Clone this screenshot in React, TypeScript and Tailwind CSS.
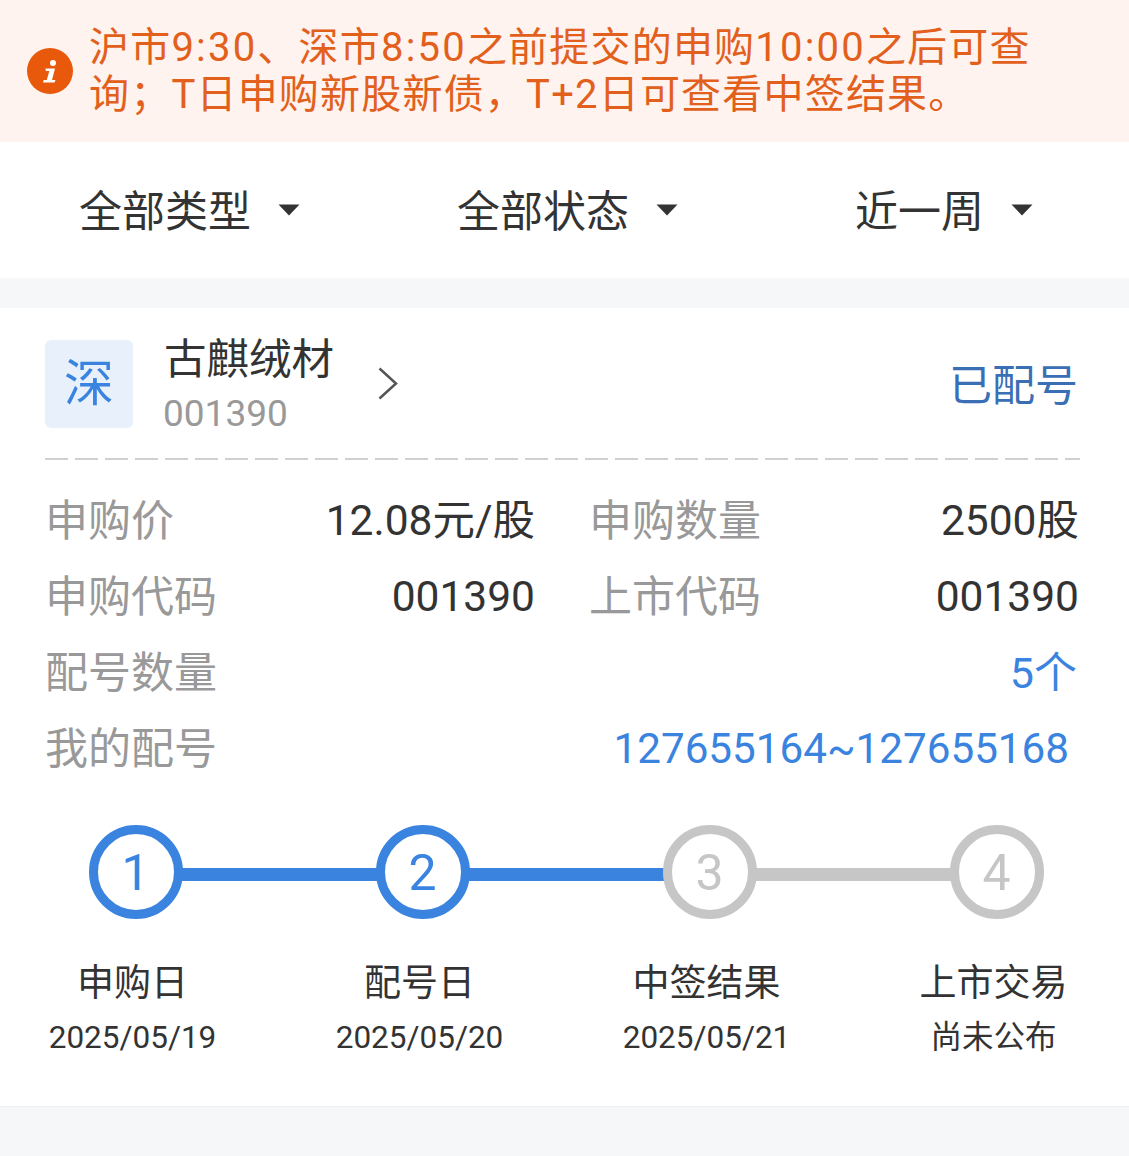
const font = "font-['Roboto','Noto_Sans_CJK_SC',sans-serif]";

const filters = [
  { label: '全部类型', width: 'w-[378px]' },
  { label: '全部状态', width: 'w-[398px]' },
  { label: '近一周', width: 'w-[353px]' },
];

const steps = [
  { n: '1', title: '申购日', date: '2025/05/19', active: true },
  { n: '2', title: '配号日', date: '2025/05/20', active: true },
  { n: '3', title: '中签结果', date: '2025/05/21', active: false },
  { n: '4', title: '上市交易', date: '尚未公布', active: false },
];

function Caret() {
  return (
    <svg width="22" height="12" viewBox="0 0 22 12" className="ml-[27px] mt-[-4px]">
      <path d="M0.5 0.5H21.5L11 11.5Z" fill="#333" />
    </svg>
  );
}

function Row({ label, value }: { label: string; value: string }) {
  return (
    <div className="flex h-[76px] items-center justify-between">
      <span className="text-[43px] text-[#999]">{label}</span>
      <span className="text-[42.5px] text-[#333]">{value}</span>
    </div>
  );
}

function Num({ children }: { children: string }) {
  return <span className="tracking-[2.2px]">{children}</span>;
}

export default function App() {
  return (
    <div className={`${font} flex h-[1156px] w-[1129px] flex-col overflow-hidden bg-[#f5f7f9]`}>
      <div className="flex h-[142px] items-center bg-[#fef3ef] pl-[27px] pr-[80px]">
        <svg width="46" height="46" viewBox="0 0 46 46" className="shrink-0">
          <circle cx="23" cy="23" r="23" fill="#e8590c" />
          <circle cx="26" cy="15" r="3" fill="#fff" />
          <path d="M18.5 20.5h9.5l-3 11.5h3.5l-1 2.5H16l.8-2.5h3l2.5-9h-3.5z" fill="#fff" />
        </svg>
        <p className="ml-[16px] text-[40px] leading-[47px] tracking-[1.2px] text-[#e2601c]">
          沪市<Num>9:30</Num>、深市<Num>8:50</Num>之前提交的申购<Num>10:00</Num>之后可查询；T日申购新股新债，T+2日可查看中签结果。
        </p>
      </div>

      <div className="flex h-[136px] items-center bg-white pt-[4px]">
        {filters.map((f) => (
          <div key={f.label} className={`flex items-center pl-[79px] ${f.width}`}>
            <span className="text-[43px] text-[#333]">{f.label}</span>
            <Caret />
          </div>
        ))}
      </div>

      <div className="mt-[30px] h-[799px] border-b border-[#eee] bg-white pl-[45px] pr-[49px]">
        <div className="flex h-[150px] items-center pt-[2px]">
          <div className="flex h-[88px] w-[88px] items-center justify-center rounded-[6px] bg-[#e8f1fb] text-[50px] text-[#3a84e0]">
            深
          </div>
          <div className="ml-[31px] flex flex-col pt-[6px]">
            <span className="text-[42.5px] leading-[54px] text-[#333]">古麒绒材</span>
            <span className="-ml-px text-[37px] leading-[54px] text-[#999]">001390</span>
          </div>
          <svg width="20" height="33" viewBox="0 0 20 33" className="mb-[2px] ml-[44px]">
            <path d="M1.5 1.5L18 16.5L1.5 31.5" fill="none" stroke="#555" strokeWidth="2.5" />
          </svg>
          <span className="ml-auto pr-[2px] pt-[4px] text-[43px] text-[#3a6fb5]">已配号</span>
        </div>
        <div className="h-[2px] bg-[repeating-linear-gradient(90deg,#d0d0d0_0_23px,transparent_23px_30px)]" />

        <div className="mt-[23px]">
          <div className="flex">
            <div className="w-[490px]"><Row label="申购价" value="12.08元/股" /></div>
            <div className="ml-[54px] w-[490px]"><Row label="申购数量" value="2500股" /></div>
          </div>
          <div className="flex">
            <div className="w-[490px]"><Row label="申购代码" value="001390" /></div>
            <div className="ml-[54px] w-[490px]"><Row label="上市代码" value="001390" /></div>
          </div>
          <div className="flex h-[76px] items-center justify-between pr-[3px]">
            <span className="text-[43px] text-[#999]">配号数量</span>
            <span className="text-[43px] text-[#3a84e0]">5个</span>
          </div>
          <div className="flex h-[76px] items-center justify-between pr-[11px]">
            <span className="text-[43px] text-[#999]">我的配号</span>
            <span className="text-[42.2px] text-[#3a84e0]">127655164~127655168</span>
          </div>
        </div>

        <div className="relative mt-[38px] -ml-[53px] grid w-[1148px] grid-cols-4">
          <div className="absolute left-[143px] top-[43px] h-[13px] w-[287px] bg-[#3a84e0]" />
          <div className="absolute left-[430px] top-[43px] h-[13px] w-[287px] bg-[#3a84e0]" />
          <div className="absolute left-[717px] top-[43px] h-[13px] w-[287px] bg-[#c6c6c6]" />
          {steps.map((s) => (
            <div key={s.n} className="relative flex w-[287px] flex-col items-center">
              <div
                className={`flex h-[94px] w-[94px] items-center justify-center rounded-full border-[9px] bg-white pt-[3px] text-[50px] ${
                  s.active ? 'border-[#3a84e0] text-[#3a84e0]' : 'border-[#c6c6c6] text-[#c6c6c6]'
                }`}
              >
                {s.n}
              </div>
              <span className="mr-[6px] mt-[38px] text-[37px] leading-[54px] text-[#333]">{s.title}</span>
              <span className="mr-[6px] text-[31.5px] leading-[54px] text-[#333]">{s.date}</span>
            </div>
          ))}
        </div>
      </div>
    </div>
  );
}
